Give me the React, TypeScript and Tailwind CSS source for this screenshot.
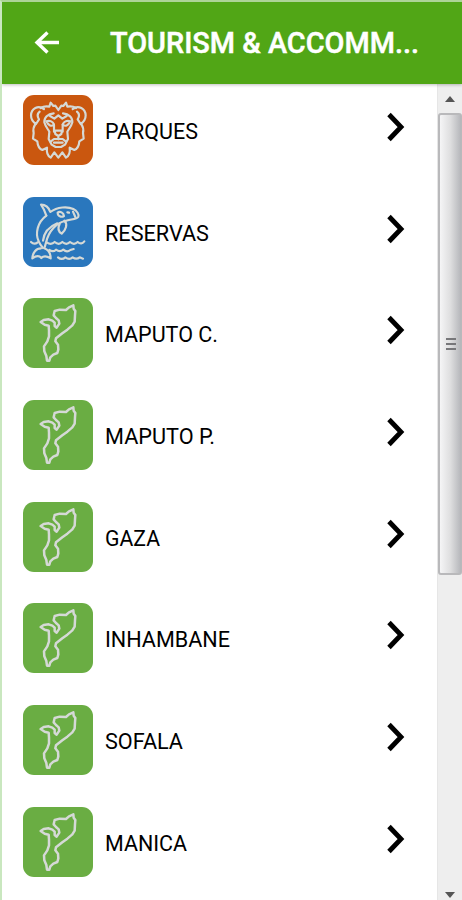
import type { ReactNode } from "react";

type IconKind = "lion" | "orca" | "map";

const ITEMS: { label: string; icon: IconKind; width: number }[] = [
  { label: "PARQUES", icon: "lion", width: 93 },
  { label: "RESERVAS", icon: "orca", width: 104 },
  { label: "MAPUTO C.", icon: "map", width: 113 },
  { label: "MAPUTO P.", icon: "map", width: 110 },
  { label: "GAZA", icon: "map", width: 55 },
  { label: "INHAMBANE", icon: "map", width: 125 },
  { label: "SOFALA", icon: "map", width: 78 },
  { label: "MANICA", icon: "map", width: 82 },
];

const TILE_COLORS: Record<IconKind, string> = {
  lion: "bg-[#ca570f]",
  orca: "bg-[#2a77bd]",
  map: "bg-[#6aad43]",
};

const DRAWINGS: Record<IconKind, ReactNode> = {
  lion: (
    <>
      <path d="M80 59C88 54 96 53 106 55L110 43 118 53 124 52 133 65 142 52 148 53 156 43 160 55C170 53 178 54 186 59" />
      <path d="M90 62C72 49 52 61 51 81C51 93 57 101 66 107L75 93C69 84 69 77 77 70M176 62C194 49 214 61 215 81C215 93 209 101 200 107L191 93C197 84 197 77 189 70" />
      <path d="M64 107C57 118 57 126 59 134L57 151L70 159C71 172 75 181 85 185L99 178C97 193 101 203 110 208L121 192 133 208 145 192 156 208C165 203 169 193 167 178L181 185C191 181 195 172 196 159L209 151 207 134C209 126 209 118 202 107" />
      <path d="M119 75C101 77 90 88 91 102C94 114 101 121 106 130L104 152 113 169 125 176H141L153 169 162 152 160 130C165 121 172 114 175 102C176 88 165 77 147 75" />
      <path d="M97 99C108 95 117 100 120 109C112 115 104 113 97 99ZM169 99C158 95 149 100 146 109C154 115 162 113 169 99Z" />
      <path d="M108 83 121 91 133 81 145 91 158 83M120 109V130M146 109V130" />
      <path d="M122 127H144L142 137 133 143 124 137ZM133 143V153M110 160 120 152H146L156 160M120 163H146" />
    </>
  ),
  orca: (
    <>
      <path d="M97 76C92 60 86 50 81 43C94 43 104 51 109 65C130 49 161 48 178 56C189 61 196 73 193 79C188 88 168 86 154 92C128 97 104 121 96 157" />
      <path d="M97 76C70 96 63 130 74 153C78 162 83 168 87 173" />
      <path d="M87 151C90 126 108 108 130 99" />
      <path d="M151 91C162 101 156 118 143 130C133 124 131 113 137 101M131 67C138 61 149 67 150 77C142 82 131 78 131 67ZM160 66L165 67M177 64L184 80" />
      <path d="M81 174C66 174 56 187 55 204C68 195 76 196 82 203C89 196 98 197 110 204C110 189 101 178 91 174L96 157" />
      <path d="M51 155C58 162 64 162 71 156M98 156C107 162 115 162 122 155C130 162 138 162 145 155C153 162 161 162 168 155C176 162 184 162 191 155C199 162 205 160 211 153" />
      <path d="M106 179C113 184 120 184 126 178C134 184 141 184 148 178C156 185 163 184 169 179L179 176M132 201C139 207 147 207 154 201C162 207 169 207 176 201C184 207 191 206 197 201L207 205" />
    </>
  ),
  map: (
    <path d="M178 42 165 48 156 56 137 55 122 59 119 72 126 80 134 87 136 97 128 109 122 104 122 94 115 88 104 84 89 86 80 92 92 100 104 103 105 117 105 135 100 150 90 165 91 180 97 194 99 208H106L109 198 118 190 130 185 133 174 132 160 124 150 126 141 145 126 160 115 175 102 182 91 183 72 184 59 179 52Z" />
  ),
};

function Tile({ icon }: { icon: IconKind }) {
  return (
    <div
      className={`h-[70px] w-[70px] shrink-0 overflow-hidden rounded-[11px] ${TILE_COLORS[icon]}`}
    >
      <svg
        viewBox="27 20 210 210"
        className="h-full w-full"
        fill="none"
        stroke="#d5d9d6"
        strokeWidth={icon === "map" ? 7.5 : 6.5}
        strokeLinecap="round"
        strokeLinejoin="round"
      >
        {DRAWINGS[icon]}
      </svg>
    </div>
  );
}

function Label({ text, width }: { text: string; width: number }) {
  return (
    <svg className="ml-3 h-[30px] w-0 flex-1 overflow-visible" aria-label={text}>
      <text
        x="0"
        y="23.5"
        textLength={width}
        lengthAdjust="spacingAndGlyphs"
        className="fill-black text-[22px]"
      >
        {text}
      </text>
    </svg>
  );
}

function Header() {
  return (
    <header className="relative z-10 flex h-[82px] shrink-0 items-center bg-[#51a616] shadow-[0_1px_3px_rgba(0,0,0,0.25)]">
      <svg viewBox="0 0 26 24" className="ml-8 h-6 w-[26px] shrink-0" fill="none" stroke="white" strokeWidth="3.4">
        <path d="M25 11.5H3M13.5 1.5 3 11.5l10.5 10" />
      </svg>
      <svg className="ml-[50px] h-[34px] w-[310px] shrink-0 overflow-visible">
        <text
          x="0"
          y="27"
          textLength="309"
          lengthAdjust="spacingAndGlyphs"
          className="fill-white stroke-white stroke-[0.5] text-[30px] font-medium"
        >
          TOURISM &amp; ACCOMM...
        </text>
      </svg>
    </header>
  );
}

function Scrollbar() {
  return (
    <div className="flex w-[25px] shrink-0 flex-col items-center border-l border-[#e6e6e6] bg-[#eeeeee]">
      <div className="flex h-[29px] w-full items-center justify-center">
        <svg viewBox="0 0 10 6" className="h-1.5 w-2.5 fill-[#555]">
          <path d="M5 0 10 6H0z" />
        </svg>
      </div>
      <div className="flex h-[462px] w-full flex-col items-center justify-center gap-[3px] rounded-[3px] border-2 border-r border-[#b9b9bb] bg-linear-to-r from-[#f5f5f6] via-[#dededf] to-[#b5b6ba]">
        <span className="h-0.5 w-2.5 bg-[#77777a]" />
        <span className="h-0.5 w-2.5 bg-[#77777a]" />
        <span className="h-0.5 w-2.5 bg-[#77777a]" />
      </div>
      <svg viewBox="0 0 10 6" className="mt-auto mb-0.5 h-1.5 w-2.5 fill-[#555]">
        <path d="M0 0h10L5 6z" />
      </svg>
    </div>
  );
}

export default function App() {
  return (
    <div className="flex h-[900px] w-[462px] flex-col overflow-hidden border-t-2 border-l-2 border-t-[#add497] border-l-[#c9e7bf] bg-white font-['Roboto',sans-serif]">
      <Header />
      <div className="flex min-h-0 flex-1">
        <ul className="min-w-0 flex-1 pt-[11px] pl-[21px]">
          {ITEMS.map((item) => (
            <li key={item.label} className="flex h-[101.7px] items-start">
              <Tile icon={item.icon} />
              <div className="flex h-[70px] flex-1 items-center">
                <Label text={item.label} width={item.width} />
                <svg
                  viewBox="0 0 18 30"
                  className="mr-8 mb-[6px] h-[30px] w-[18px] shrink-0"
                  fill="none"
                  stroke="black"
                  strokeWidth="4.8"
                >
                  <path d="M2 2.5 14 15 2 27.5" />
                </svg>
              </div>
            </li>
          ))}
        </ul>
        <Scrollbar />
      </div>
    </div>
  );
}
